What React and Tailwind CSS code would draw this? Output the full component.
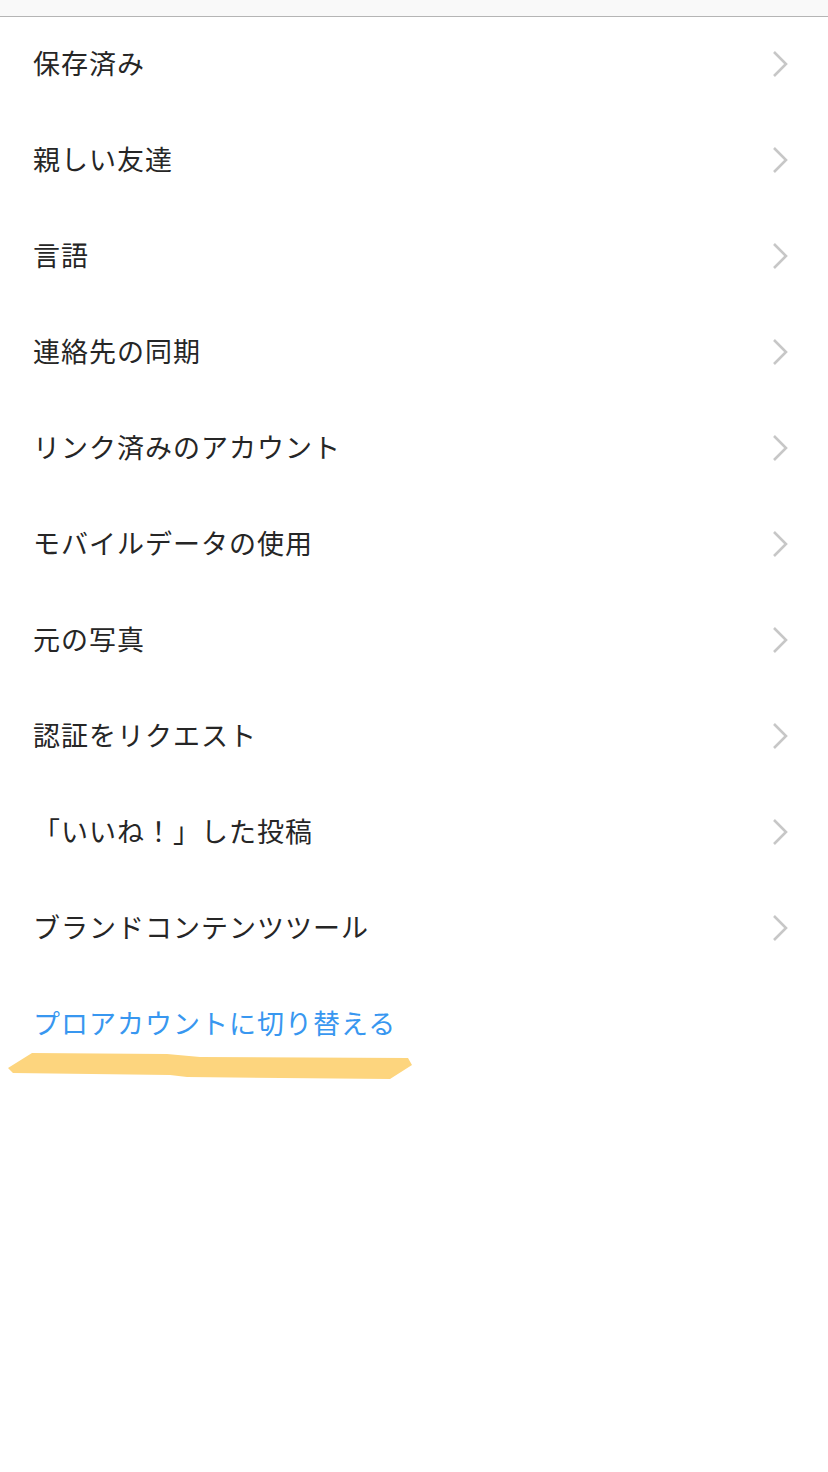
const ITEMS = [
  '保存済み',
  '親しい友達',
  '言語',
  '連絡先の同期',
  'リンク済みのアカウント',
  'モバイルデータの使用',
  '元の写真',
  '認証をリクエスト',
  '「いいね！」した投稿',
  'ブランドコンテンツツール',
];

function Chevron() {
  return (
    <svg width="16" height="28" viewBox="0 0 16 28" className="shrink-0 -mt-[2px]">
      <path d="M2 2 L14 14 L2 26" fill="none" stroke="#c7c7c7" strokeWidth="2.6" />
    </svg>
  );
}

export default function App() {
  return (
    <div
      className="w-[828px] h-[1472px] bg-white overflow-hidden"
      style={{ fontFamily: '"Noto Sans CJK JP", "Noto Sans", sans-serif' }}
    >
      {/* top bar */}
      <div className="h-[17px] bg-[#f9f9f9] border-b border-[#b5b5b5]" />

      <div className="flex flex-col">
        {ITEMS.map((label) => (
          <div key={label} className="h-[96px] flex items-center justify-between pl-[33px] pr-[40px]">
            <span className="text-[27px] leading-none -mt-[6px] text-[#262626] tracking-[1px]">{label}</span>
            <Chevron />
          </div>
        ))}

        <div className="relative h-[96px] flex items-center pl-[33px]">
          <span className="text-[27px] leading-none -mt-[6px] text-[#3897f0] tracking-[1px]">
            プロアカウントに切り替える
          </span>
          <svg
            className="absolute left-0 top-[73px]"
            width="420"
            height="32"
            viewBox="0 1050 420 32"
          >
            <path
              d="M8 1068 L32 1053 L167 1054 L200 1057 L408 1058 L412 1065 L390 1079 L187 1077 L170 1075 L13 1073 Z"
              fill="#fdd57e"
            />
          </svg>
        </div>
      </div>
    </div>
  );
}
